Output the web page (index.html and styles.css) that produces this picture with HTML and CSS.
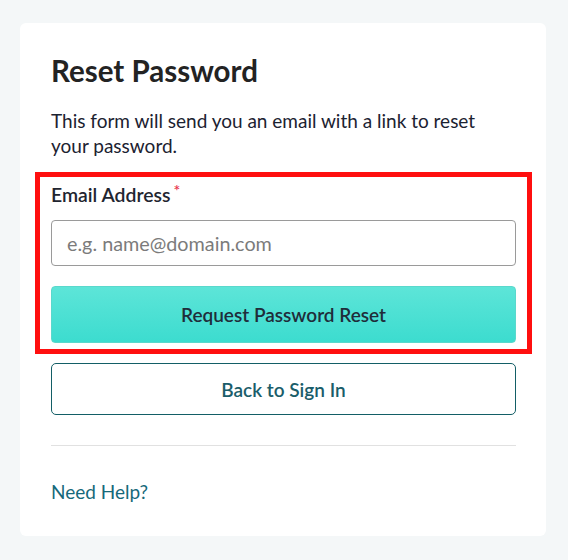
FILE: index.html
```html
<!DOCTYPE html>
<html lang="en">
<head>
<meta charset="utf-8">
<title>Reset Password</title>
<link rel="stylesheet" href="styles.css">
</head>
<body>
<main class="card">
  <h1 class="title">Reset Password</h1>
  <p class="intro">This form will send you an email with a link to reset your password.</p>
  <form class="form">
    <div class="highlight">
      <label class="label" for="email">Email Address<span class="req">*</span></label>
      <input class="input" id="email" type="email" placeholder="e.g. name@domain.com">
      <button class="btn-primary" type="button">Request Password Reset</button>
    </div>
    <button class="btn-secondary" type="button">Back to Sign In</button>
  </form>
  <hr class="divider">
  <a class="help" href="#">Need Help?</a>
</main>
</body>
</html>
```

FILE: styles.css
```css
* { box-sizing: border-box; }
html, body { margin: 0; }
body {
  background: #f4f7f8;
  padding: 23px 22px 24px 20px;
  font-family: "Lato", "Noto Sans", sans-serif;
  color: #1f2530;
}
.card {
  background: #fff;
  border-radius: 6px;
  width: 526px;
  height: 513px;
  padding: 31px 30px 0 31px;
}
.title {
  margin: 0;
  font-size: 29.5px;
  line-height: 34px;
  font-weight: 700;
  color: #232323;
}
.intro {
  margin: 20px 0 0;
  font-size: 19px;
  line-height: 25px;
  color: #1c2231;
}
.form {
  margin-top: 25px;
  display: flex;
  flex-direction: column;
  gap: 20px;
}
.highlight {
  position: relative;
  display: flex;
  flex-direction: column;
}
.highlight::after {
  content: "";
  position: absolute;
  top: -11px;
  left: -16px;
  right: -16px;
  bottom: -11px;
  border: 5px solid #ff0f0f;
  pointer-events: none;
}
.label {
  font-size: 19.4px;
  line-height: 24px;
  font-weight: 600;
  color: #1f2530;
}
.req {
  color: #e8344e;
  font-size: 16px;
  vertical-align: top;
  margin-left: 3px;
  position: relative;
  top: -5px;
}
.input {
  margin-top: 13px;
  height: 46px;
  border: 1px solid #9a9a9a;
  border-radius: 4px;
  padding: 0 15px;
  font: inherit;
  font-size: 19.8px;
  color: #333;
}
.input::placeholder { color: #7b7b7b; }
.btn-primary {
  margin-top: 20px;
  height: 57px;
  border: 1px solid #5ad8cc;
  border-radius: 4px;
  background: linear-gradient(#5de5d8, #3cdccf);
  font: inherit;
  font-size: 19px;
  font-weight: 600;
  color: #1f2d3a;
}
.btn-secondary {
  height: 52px;
  border: 1px solid #135e66;
  border-radius: 5px;
  background: #fff;
  font: inherit;
  font-size: 19px;
  font-weight: 600;
  color: #1a5d6a;
}
.divider {
  margin: 30px 0 0;
  border: 0;
  border-top: 1px solid #e1e1e1;
}
.help {
  display: inline-block;
  margin-top: 34px;
  font-size: 19px;
  line-height: 24px;
  color: #16697a;
  text-decoration: none;
}
```
